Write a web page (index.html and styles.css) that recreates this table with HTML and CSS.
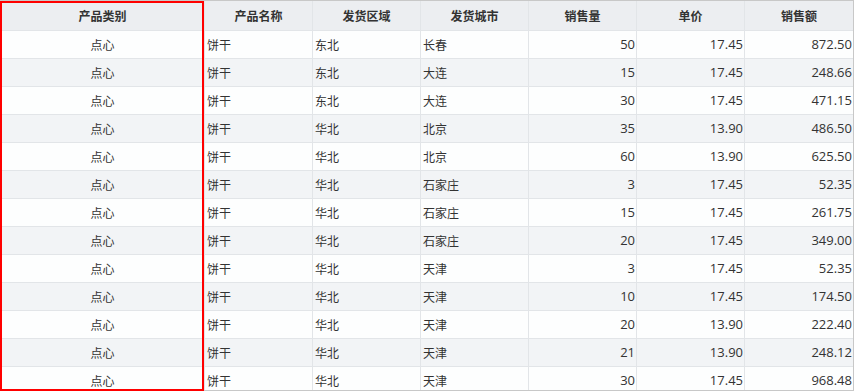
FILE: index.html
```html
<!DOCTYPE html>
<html lang="zh-CN">
<head>
<meta charset="utf-8">
<title>销售明细</title>
<link rel="stylesheet" href="styles.css">
</head>
<body>
<div class="wrap">
  <div class="grid">
    <div class="row head">
      <div class="c">产品类别</div><div class="c">产品名称</div><div class="c">发货区域</div><div class="c">发货城市</div><div class="c">销售量</div><div class="c">单价</div><div class="c">销售额</div>
    </div>
    <div class="row"><div class="c ctr">点心</div><div class="c">饼干</div><div class="c">东北</div><div class="c">长春</div><div class="c num">50</div><div class="c num">17.45</div><div class="c num">872.50</div></div>
    <div class="row alt"><div class="c ctr">点心</div><div class="c">饼干</div><div class="c">东北</div><div class="c">大连</div><div class="c num">15</div><div class="c num">17.45</div><div class="c num">248.66</div></div>
    <div class="row"><div class="c ctr">点心</div><div class="c">饼干</div><div class="c">东北</div><div class="c">大连</div><div class="c num">30</div><div class="c num">17.45</div><div class="c num">471.15</div></div>
    <div class="row alt"><div class="c ctr">点心</div><div class="c">饼干</div><div class="c">华北</div><div class="c">北京</div><div class="c num">35</div><div class="c num">13.90</div><div class="c num">486.50</div></div>
    <div class="row"><div class="c ctr">点心</div><div class="c">饼干</div><div class="c">华北</div><div class="c">北京</div><div class="c num">60</div><div class="c num">13.90</div><div class="c num">625.50</div></div>
    <div class="row alt"><div class="c ctr">点心</div><div class="c">饼干</div><div class="c">华北</div><div class="c">石家庄</div><div class="c num">3</div><div class="c num">17.45</div><div class="c num">52.35</div></div>
    <div class="row"><div class="c ctr">点心</div><div class="c">饼干</div><div class="c">华北</div><div class="c">石家庄</div><div class="c num">15</div><div class="c num">17.45</div><div class="c num">261.75</div></div>
    <div class="row alt"><div class="c ctr">点心</div><div class="c">饼干</div><div class="c">华北</div><div class="c">石家庄</div><div class="c num">20</div><div class="c num">17.45</div><div class="c num">349.00</div></div>
    <div class="row"><div class="c ctr">点心</div><div class="c">饼干</div><div class="c">华北</div><div class="c">天津</div><div class="c num">3</div><div class="c num">17.45</div><div class="c num">52.35</div></div>
    <div class="row alt"><div class="c ctr">点心</div><div class="c">饼干</div><div class="c">华北</div><div class="c">天津</div><div class="c num">10</div><div class="c num">17.45</div><div class="c num">174.50</div></div>
    <div class="row"><div class="c ctr">点心</div><div class="c">饼干</div><div class="c">华北</div><div class="c">天津</div><div class="c num">20</div><div class="c num">13.90</div><div class="c num">222.40</div></div>
    <div class="row alt"><div class="c ctr">点心</div><div class="c">饼干</div><div class="c">华北</div><div class="c">天津</div><div class="c num">21</div><div class="c num">13.90</div><div class="c num">248.12</div></div>
    <div class="row"><div class="c ctr">点心</div><div class="c">饼干</div><div class="c">华北</div><div class="c">天津</div><div class="c num">30</div><div class="c num">17.45</div><div class="c num">968.48</div></div>
  </div>
  <div class="sel"></div>
</div>
</body>
</html>
```
FILE: styles.css
```css
html, body {
  margin: 0;
  padding: 0;
  background: #ffffff;
}
.wrap {
  position: relative;
  width: 854px;
  height: 392px;
}
.grid {
  box-sizing: border-box;
  width: 854px;
  height: 391px;
  border: 1px solid #c8c8c8;
  overflow: hidden;
  font-family: "Noto Sans CJK SC", "Microsoft YaHei", sans-serif;
  font-size: 12px;
  color: #333333;
  background: #ffffff;
}
.row {
  display: grid;
  grid-template-columns: 204px repeat(6, 108px);
  box-sizing: border-box;
  height: 28px;
  border-bottom: 1px solid #e2e5e8;
  background: #fdfefe;
}
.row.alt {
  background: #f2f4f6;
}
.row.head {
  height: 30px;
  background: #eceef1;
  font-weight: bold;
}
.c {
  box-sizing: border-box;
  border-right: 1px solid #e2e5e8;
  padding: 0 2px;
  line-height: 27px;
  white-space: nowrap;
  overflow: hidden;
}
.head .c {
  line-height: 29px;
  text-align: center;
}
.c:last-child {
  border-right: none;
}
.ctr {
  text-align: center;
}
.num {
  text-align: right;
  padding-right: 1px;
  font-family: "Open Sans", "Noto Sans CJK SC", sans-serif;
  font-size: 13px;
}
.sel {
  position: absolute;
  left: 0;
  top: 1px;
  width: 204px;
  height: 390px;
  box-sizing: border-box;
  border: 2px solid #ff0000;
  pointer-events: none;
}
```
